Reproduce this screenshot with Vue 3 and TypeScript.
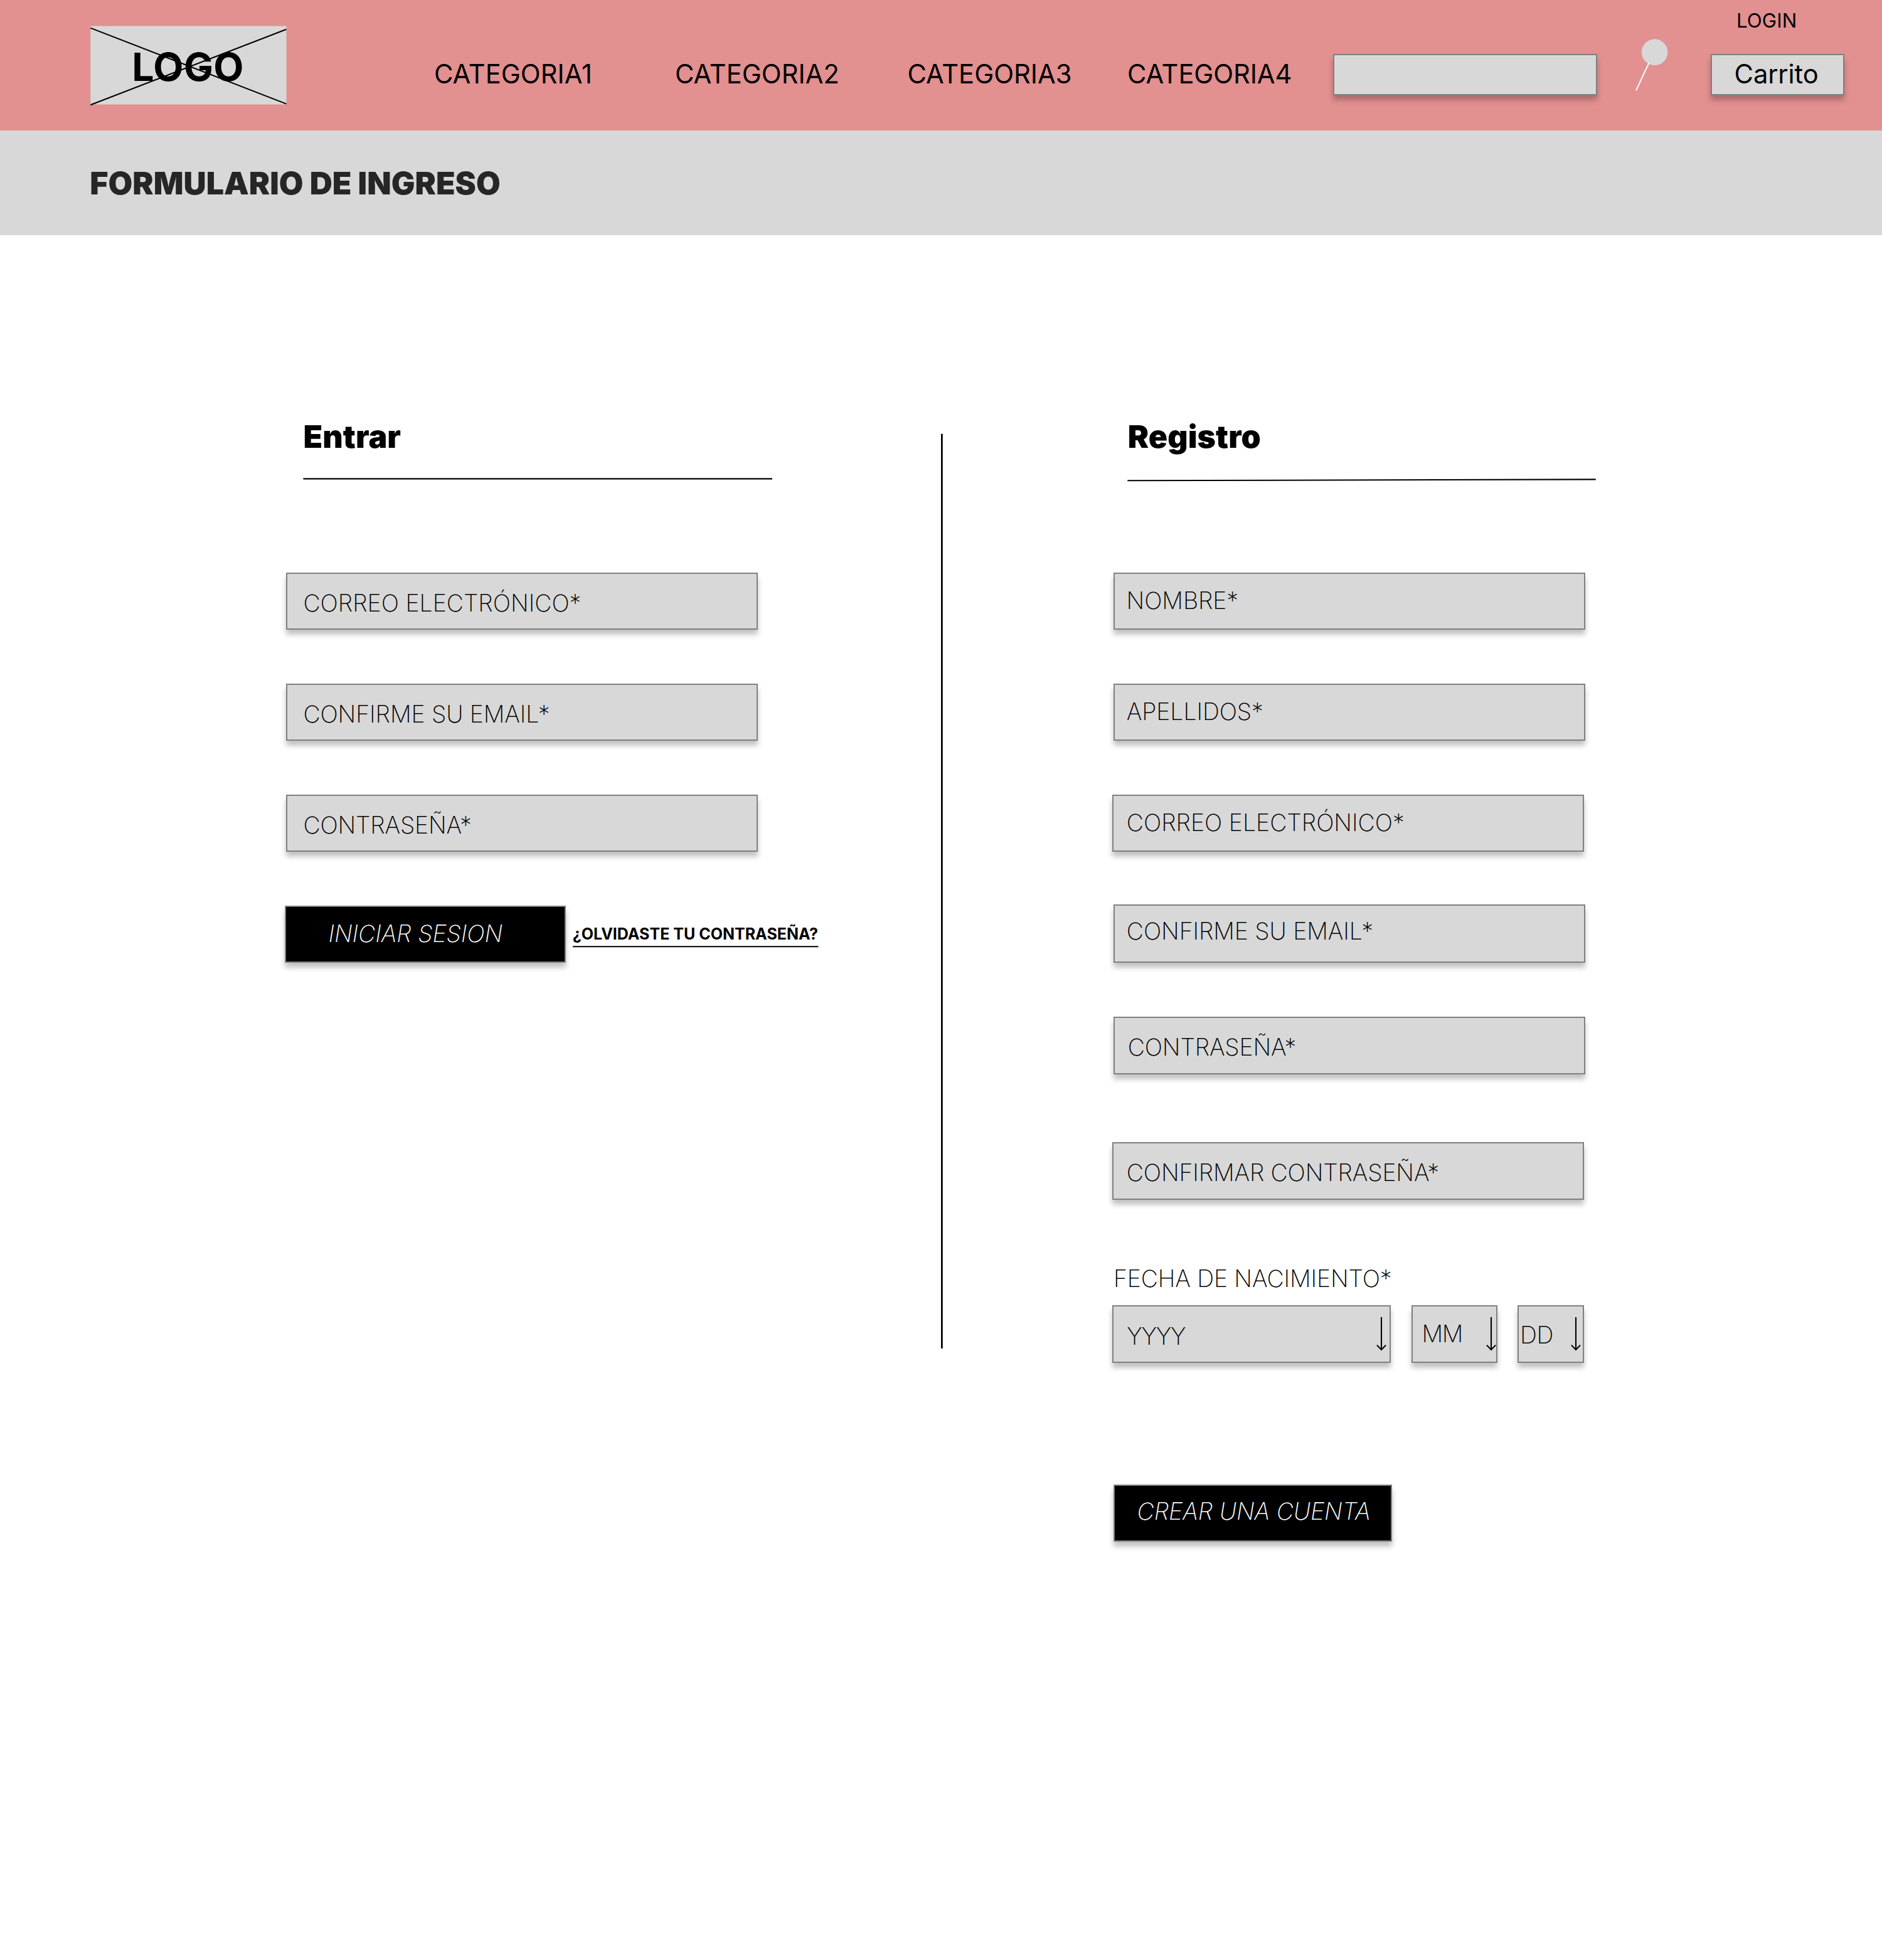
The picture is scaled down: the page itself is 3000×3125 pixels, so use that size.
<script setup lang="ts">
interface Category {
  label: string
  tracking: number
}

interface Field {
  label: string
  // outer box
  x: number
  gap: number
  height: number
  // label inside the box
  textX: number
  textY: number
  tracking: number
}

interface DatePart {
  label: string
  width: number
  textX: number
  textY: number
  tracking: number
  arrowX: number
}

const categories: Category[] = [
  { label: 'CATEGORIA1', tracking: 0 },
  { label: 'CATEGORIA2', tracking: 0 },
  { label: 'CATEGORIA3', tracking: 0 },
  { label: 'CATEGORIA4', tracking: -0.1 },
]

const loginFields: Field[] = [
  { label: 'CORREO ELECTRÓNICO*', x: 2, gap: 0, height: 91, textX: 25.4, textY: 24, tracking: -0.02 },
  { label: 'CONFIRME SU EMAIL*', x: 2, gap: 86, height: 91, textX: 25.4, textY: 24, tracking: -0.1 },
  { label: 'CONTRASEÑA*', x: 2, gap: 86, height: 91, textX: 25.4, textY: 24, tracking: -0.18 },
]

const registerFields: Field[] = [
  { label: 'NOMBRE*', x: 2, gap: 0, height: 91, textX: 18.6, textY: 20, tracking: -0.1 },
  { label: 'APELLIDOS*', x: 2, gap: 86, height: 91, textX: 18.8, textY: 20, tracking: -0.1 },
  { label: 'CORREO ELECTRÓNICO*', x: 0, gap: 86, height: 91, textX: 20.8, textY: 20, tracking: -0.02 },
  { label: 'CONFIRME SU EMAIL*', x: 2, gap: 84, height: 93, textX: 18.8, textY: 18, tracking: -0.1 },
  { label: 'CONTRASEÑA*', x: 2, gap: 86, height: 92, textX: 20.8, textY: 24, tracking: -0.18 },
  { label: 'CONFIRMAR CONTRASEÑA*', x: 0, gap: 108, height: 92, textX: 20.8, textY: 24, tracking: -0.16 },
]

const dateParts: DatePart[] = [
  { label: 'YYYY', width: 444, textX: 21.2, textY: 25, tracking: -1.2, arrowX: 428.8 },
  { label: 'MM', width: 137, textX: 15, textY: 21, tracking: -1.4, arrowX: 127.3 },
  { label: 'DD', width: 106, textX: 2, textY: 23, tracking: -0.4, arrowX: 93.3 },
]

const boxStyle = (f: Field) => ({
  marginTop: `${f.gap}px`,
  marginLeft: `${f.x}px`,
  height: `${f.height}px`,
  padding: `${f.textY}px 0 0 ${f.textX}px`,
  letterSpacing: `${f.tracking}px`,
})

const dateStyle = (d: DatePart) => ({
  width: `${d.width}px`,
  padding: `${d.textY}px 0 0 ${d.textX}px`,
  letterSpacing: `${d.tracking}px`,
})
</script>

<template>
  <div class="page">
    <header class="header">
      <div class="logo">
        <svg class="logo-bg" width="314" height="170" viewBox="0 0 314 170">
          <rect x="0.2" y="41.5" width="312.3" height="125" fill="#d8d8d8" />
          <path d="M0.3 44.6L312.4 165.6M0.3 167.2L312.4 46.8" stroke="#000" stroke-width="2.08" fill="none" />
        </svg>
        <span class="logo-text">LOGO</span>
      </div>
      <nav class="nav">
        <a v-for="c in categories" :key="c.label" :style="{ letterSpacing: `${c.tracking}px` }">{{ c.label }}</a>
      </nav>
      <div class="box search"></div>
      <svg class="magnifier" width="70" height="160" viewBox="0 0 70 160">
        <circle cx="37.6" cy="83.2" r="20.83" fill="#d8d8d8" />
        <path d="M28.4 100.4L7.9 144.4" stroke="#fff" stroke-width="2.08" />
      </svg>
      <div class="account">
        <a class="login-link">LOGIN</a>
        <div class="box cart">Carrito</div>
      </div>
    </header>

    <div class="title-bar">
      <h1>FORMULARIO DE INGRESO</h1>
    </div>

    <main class="main">
      <section class="login">
        <h2>Entrar</h2>
        <svg class="rule" width="760" height="10" viewBox="0 0 760 10">
          <path d="M29.4 5.35H777" stroke="#000" stroke-width="2.08" />
        </svg>
        <div class="fields">
          <div v-for="f in loginFields" :key="f.label" class="box field" :style="boxStyle(f)">{{ f.label }}</div>
        </div>
        <div class="actions">
          <div class="box button sign-in">INICIAR SESION</div>
          <a class="forgot">
            ¿OLVIDASTE TU CONTRASEÑA?
            <svg width="392" height="6" viewBox="0 0 392 6">
              <path d="M0 3.3H391.4" stroke="#000" stroke-width="2.08" />
            </svg>
          </a>
        </div>
      </section>

      <svg class="divider" width="4" height="1460" viewBox="0 0 4 1460">
        <rect x="0" y="0.7" width="2.75" height="1458.3" fill="#000" />
      </svg>

      <section class="register">
        <h2>Registro</h2>
        <svg class="rule" width="760" height="10" viewBox="0 0 760 10">
          <path d="M24.3 8.3L770.8 6.4" stroke="#000" stroke-width="2.08" />
        </svg>
        <div class="fields">
          <div v-for="f in registerFields" :key="f.label" class="box field" :style="boxStyle(f)">{{ f.label }}</div>
        </div>
        <p class="birth">FECHA DE NACIMIENTO*</p>
        <div class="date">
          <div v-for="d in dateParts" :key="d.label" class="box part" :style="dateStyle(d)">
            {{ d.label }}
            <svg class="arrow" :style="{ left: `${d.arrowX - 12}px` }" width="20" height="60" viewBox="0 0 20 60">
              <path d="M10 0V52M2.9 44.6L10 52L17.1 44.6" stroke="#000" stroke-width="2.08" fill="none" />
            </svg>
          </div>
        </div>
        <div class="box button create">CREAR UNA CUENTA</div>
      </section>
    </main>
  </div>
</template>

<style>
body {
  background: #fff;
}
</style>

<style scoped>
.page {
  width: 3000px;
  height: 3125px;
  overflow: hidden;
  background: #fff;
  color: #000;
  font-family: Inter, "Liberation Sans", sans-serif;
  white-space: nowrap;
}

svg {
  display: block;
  overflow: visible;
}

.box {
  box-sizing: border-box;
  flex: none;
  background: #d8d8d8;
  border: 2px solid #808080;
  box-shadow: 0 8.33px 8.33px rgba(0, 0, 0, 0.25);
}

.header {
  display: flex;
  align-items: flex-start;
  height: 208px;
  background: #e29090;
}

.logo {
  position: relative;
  flex: none;
  width: 692px;
  height: 208px;
  box-sizing: border-box;
  padding-left: 144px;
}

.logo-text {
  position: absolute;
  left: 210.2px;
  top: 68px;
  font-size: 62.5px;
  line-height: 76px;
  font-weight: 700;
  letter-spacing: 0.5px;
}

.nav {
  display: grid;
  flex: none;
  grid-template-columns: 384px 370.4px 350.6px 328px;
  margin-top: 93px;
  font-size: 41.667px;
  line-height: 50px;
}

.search {
  width: 421px;
  height: 66px;
  margin-top: 86px;
}

.magnifier {
  flex: none;
  margin-left: 54px;
}

.account {
  flex: none;
  width: 213px;
  margin: 14px 0 0 57px;
}

.login-link {
  display: block;
  padding-left: 41px;
  font-size: 31.25px;
  line-height: 38px;
  letter-spacing: 0.1px;
}

.cart {
  height: 66px;
  margin-top: 34px;
  padding: 5px 0 0 35.6px;
  font-size: 41.667px;
  line-height: 50px;
  letter-spacing: -0.12px;
}

.title-bar {
  height: 167px;
  box-sizing: border-box;
  padding: 54px 0 0 143.2px;
  background: #d8d8d8;
}

h1 {
  margin: 0;
  font-size: 50px;
  line-height: 60px;
  font-weight: 900;
  letter-spacing: 0.05px;
  color: #262626;
}

h2 {
  margin: 0;
  font-size: 50px;
  line-height: 60px;
  font-weight: 900;
  letter-spacing: 0.1px;
}

.main {
  display: flex;
  align-items: flex-start;
  padding: 291px 0 0 454px;
}

.login {
  flex: none;
  width: 1046px;
}

.login h2 {
  padding-left: 29.5px;
}

.divider {
  flex: none;
  margin-top: 25px;
}

.register {
  flex: none;
  width: 760px;
  margin-left: 269px;
}

.register h2 {
  padding-left: 24.8px;
}

.rule {
  margin-top: 32px;
}

.fields {
  display: flex;
  flex-direction: column;
  margin-top: 145px;
}

.field {
  width: 752px;
}

.field,
.part,
.button {
  font-size: 37.5px;
  line-height: 45px;
  font-weight: 200;
}

.actions {
  display: flex;
  align-items: flex-start;
  margin-top: 86px;
}

.button {
  background: #000;
  color: #fff;
  font-style: italic;
}

.sign-in {
  width: 448px;
  height: 91px;
  padding: 20px 0 0 67.4px;
  letter-spacing: -0.05px;
}

.forgot {
  margin: 30px 0 0 10.7px;
  font-size: 25px;
  line-height: 30px;
  font-weight: 700;
}

.forgot svg {
  margin-top: 2px;
}

.birth {
  margin: 103px 0 0 2px;
  font-size: 37.5px;
  line-height: 45px;
  font-weight: 200;
  letter-spacing: -0.14px;
}

.date {
  display: flex;
  gap: 32.5px;
  margin-top: 20px;
}

.part {
  position: relative;
  height: 92px;
}

.arrow {
  position: absolute;
  top: 17px;
}

.create {
  width: 444px;
  height: 91px;
  margin: 194px 0 0 2px;
  padding: 18px 0 0 35.6px;
  letter-spacing: -0.04px;
}
</style>
